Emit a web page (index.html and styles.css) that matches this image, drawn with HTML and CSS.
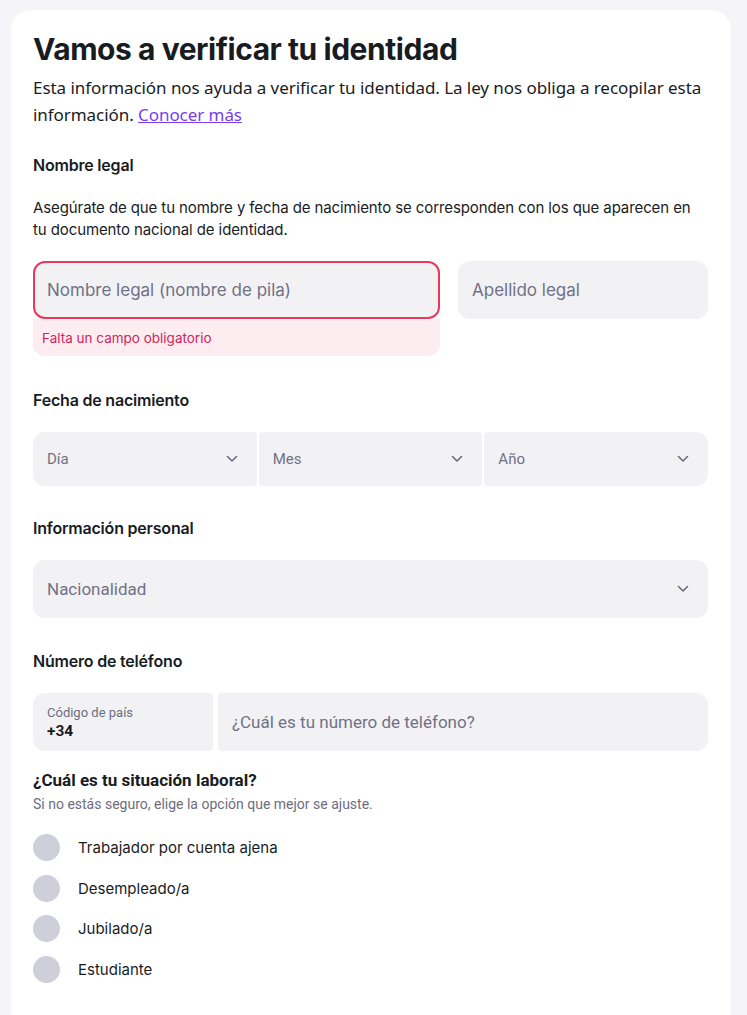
FILE: index.html
```html
<!DOCTYPE html>
<html lang="es">
<head>
<meta charset="utf-8">
<title>Vamos a verificar tu identidad</title>
<link rel="stylesheet" href="styles.css">
</head>
<body>
<main class="card">
  <h1 class="title">Vamos a verificar tu identidad</h1>
  <p class="intro"><span>Esta información nos ayuda a verificar tu identidad. La ley nos obliga a recopilar esta</span> <span>información.</span> <a href="#" class="link">Conocer más</a></p>

  <section class="section">
    <h2 class="section-title">Nombre legal</h2>
    <p class="desc">Asegúrate de que tu nombre y fecha de nacimiento se corresponden con los que aparecen en tu documento nacional de identidad.</p>
    <div class="name-row">
      <div class="name-first">
        <div class="field field-error"><span class="placeholder">Nombre legal (nombre de pila)</span></div>
        <div class="error-msg">Falta un campo obligatorio</div>
      </div>
      <div class="name-last">
        <div class="field"><span class="placeholder">Apellido legal</span></div>
      </div>
    </div>
  </section>

  <section class="section section-date">
    <h2 class="section-title">Fecha de nacimiento</h2>
    <div class="date-row">
      <div class="select select-date date-first"><span class="placeholder narrow">Día</span><svg class="chev" viewBox="0 0 12 8" width="12" height="8"><path d="M1.5 1.5 6 6l4.5-4.5" fill="none" stroke="#6b6b80" stroke-width="1.6" stroke-linecap="round" stroke-linejoin="round"/></svg></div>
      <div class="select select-date"><span class="placeholder narrow">Mes</span><svg class="chev" viewBox="0 0 12 8" width="12" height="8"><path d="M1.5 1.5 6 6l4.5-4.5" fill="none" stroke="#6b6b80" stroke-width="1.6" stroke-linecap="round" stroke-linejoin="round"/></svg></div>
      <div class="select select-date date-last"><span class="placeholder narrow">Año</span><svg class="chev" viewBox="0 0 12 8" width="12" height="8"><path d="M1.5 1.5 6 6l4.5-4.5" fill="none" stroke="#6b6b80" stroke-width="1.6" stroke-linecap="round" stroke-linejoin="round"/></svg></div>
    </div>
  </section>

  <section class="section section-personal">
    <h2 class="section-title">Información personal</h2>
    <div class="select select-full"><span class="placeholder narrow big">Nacionalidad</span><svg class="chev" viewBox="0 0 12 8" width="12" height="8"><path d="M1.5 1.5 6 6l4.5-4.5" fill="none" stroke="#6b6b80" stroke-width="1.6" stroke-linecap="round" stroke-linejoin="round"/></svg></div>
  </section>

  <section class="section section-phone">
    <h2 class="section-title">Número de teléfono</h2>
    <div class="phone-row">
      <div class="code-box">
        <span class="code-label">Código de país</span>
        <span class="code-value">+34</span>
      </div>
      <div class="field phone-field"><span class="placeholder narrow big">¿Cuál es tu número de teléfono?</span></div>
    </div>
  </section>

  <section class="section section-work">
    <h2 class="work-title">¿Cuál es tu situación laboral?</h2>
    <p class="work-sub">Si no estás seguro, elige la opción que mejor se ajuste.</p>
    <ul class="radio-list">
      <li class="radio-item"><span class="radio"></span><span class="radio-label">Trabajador por cuenta ajena</span></li>
      <li class="radio-item"><span class="radio"></span><span class="radio-label">Desempleado/a</span></li>
      <li class="radio-item"><span class="radio"></span><span class="radio-label">Jubilado/a</span></li>
      <li class="radio-item"><span class="radio"></span><span class="radio-label">Estudiante</span></li>
    </ul>
  </section>
</main>
</body>
</html>
```
FILE: styles.css
```css
* { box-sizing: border-box; }
html, body { margin: 0; padding: 0; }
body {
  background: #f5f5f9;
  font-family: Inter, "Noto Sans", sans-serif;
  color: #191c1f;
  padding: 10px 16px 0 11px;
}
.card {
  background: #fff;
  border-radius: 20px 20px 0 0;
  width: 720px;
  min-height: 1010px;
  padding: 21px 23px 30px 22px;
}
.title {
  margin: 0;
  font-size: 30px;
  font-weight: 700;
  letter-spacing: -0.45px;
  line-height: 36px;
  color: #191c1f;
}
.intro {
  margin: 7px 0 0;
  font-family: "Noto Sans", sans-serif;
  font-size: 17px;
  letter-spacing: -0.06px;
  line-height: 27px;
  color: #191c1f;
}
.link { color: #7a3df0; text-decoration: underline; }
.section { margin-top: 25px; }
.section-title {
  margin: 0;
  font-size: 16px;
  font-weight: 600;
  line-height: 24px;
  letter-spacing: -0.2px;
}
.desc {
  margin: 20px 0 0;
  font-size: 15px;
  line-height: 22px;
  letter-spacing: -0.1px;
}
.name-row { display: flex; gap: 18px; margin-top: 20px; }
.name-first { width: 407px; }
.name-last { flex: 1; }
.field {
  height: 58px;
  background: #f2f2f5;
  border-radius: 12px;
  display: flex;
  align-items: center;
  padding: 0 14px;
}
.field-error {
  border: 2px solid #e8385c;
  padding: 0 12px;
  position: relative;
  z-index: 1;
}
.placeholder {
  font-size: 17px;
  color: #717185;
}
.narrow { font-family: Roboto, sans-serif; font-size: 15px; }
.narrow.big { font-size: 17px; }
.error-msg {
  background: #fdedf1;
  border-radius: 0 0 12px 12px;
  height: 37px;
  padding: 11px 9px 0;
  font-size: 13.5px;
  color: #d2245b;
}
.section-date { margin-top: 32px; }
.date-row { display: flex; gap: 2px; margin-top: 20px; }
.select {
  background: #f2f2f5;
  display: flex;
  align-items: center;
  justify-content: space-between;
  padding: 0 19px 0 14px;
}
.select-date { flex: 1; height: 54px; border-radius: 4px; }
.date-first { border-radius: 12px 4px 4px 12px; }
.date-last { border-radius: 4px 12px 12px 4px; }
.section-personal { margin-top: 30px; }
.select-full { height: 58px; border-radius: 12px; margin-top: 20px; }
.section-phone { margin-top: 31px; }
.phone-row { display: flex; gap: 5px; margin-top: 20px; }
.code-box {
  width: 180px;
  height: 58px;
  background: #f2f2f5;
  border-radius: 12px 4px 4px 12px;
  display: flex;
  flex-direction: column;
  justify-content: center;
  padding: 0 14px;
  font-family: Roboto, sans-serif;
}
.code-label { font-size: 13px; color: #6d6d80; line-height: 17px; }
.code-value { font-size: 15.5px; font-weight: 700; color: #191c1f; line-height: 20px; }
.phone-field { flex: 1; border-radius: 4px 12px 12px 4px; }
.section-work { margin-top: 18px; }
.work-title {
  margin: 0;
  font-family: Roboto, sans-serif;
  font-size: 17px;
  font-weight: 700;
  line-height: 22px;
}
.work-sub {
  margin: 3px 0 0;
  font-family: Roboto, sans-serif;
  font-size: 14px;
  color: #6d6d80;
  line-height: 20px;
}
.radio-list { list-style: none; margin: 20px 0 0; padding: 0; display: flex; flex-direction: column; gap: 13.5px; }
.radio-item { display: flex; align-items: center; gap: 18px; height: 27px; }
.radio { width: 27px; height: 27px; border-radius: 50%; background: #cfcfd9; flex: none; }
.radio-label { font-size: 15px; color: #191c1f; }
```
